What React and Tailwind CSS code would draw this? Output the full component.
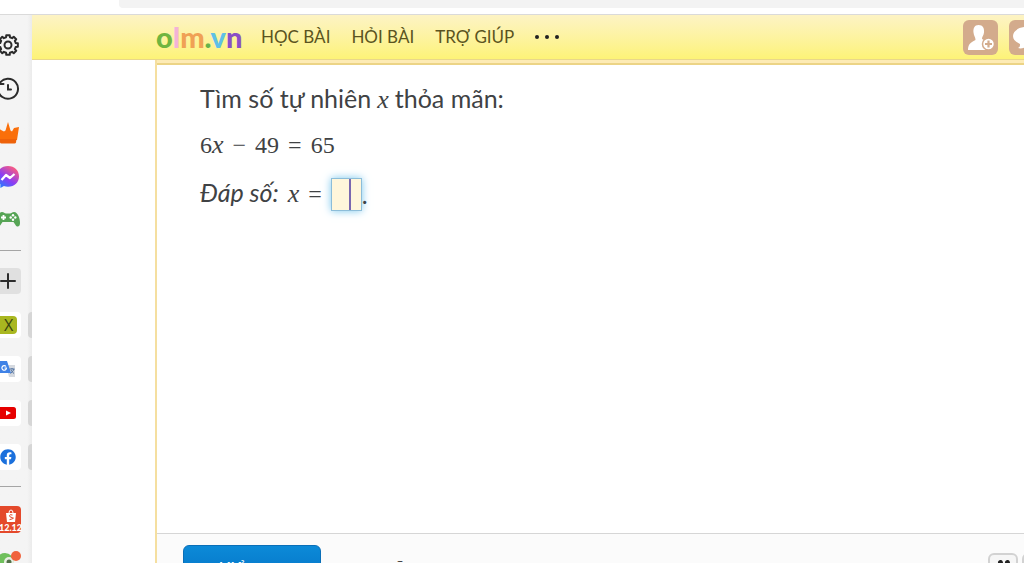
import React from 'react';
import { Plus } from 'lucide-react';
import { FaFacebook } from 'react-icons/fa';

const Tile = ({ children, label }) => (
  <li className="flex h-11 items-center justify-between">
    <button aria-label={label} className="flex h-[26px] w-[21px] items-center rounded-r bg-white">{children}</button>
    <span className="block h-[26px] w-1 rounded-l-sm bg-[#d6d6d6]"></span>
  </li>
);

const Shortcut = ({ children, label }) => (
  <li className="h-11">
    <button aria-label={label} className="flex h-11 w-4 items-center justify-center">{children}</button>
  </li>
);

// eight rounded teeth around a ring
const gearPoints = Array.from({ length: 8 }, (_, i) =>
  [[-14, 8], [-10, 10], [10, 10], [14, 8]].map(([offset, r]) => {
    const a = ((i * 45 + offset) * Math.PI) / 180;
    return `${12 + r * Math.sin(a)},${12 - r * Math.cos(a)}`;
  }).join(' ')
).join(' ');

const Sidebar = () => (
  <aside aria-label="Sidebar" className="w-8 shrink-0 overflow-hidden bg-linear-to-r from-[#f4f4f4] from-85% to-[#ebebeb]">
    <ul className="pt-2">
      <Shortcut label="Settings">
        <svg viewBox="0 0 24 24" className="size-6 shrink-0" fill="none" stroke="#2b2b2b" strokeWidth="2" strokeLinejoin="round">
          <polygon points={gearPoints} />
          <circle cx="12" cy="12" r="3.5" />
        </svg>
      </Shortcut>
      <Shortcut label="History">
        <svg viewBox="0 0 24 24" className="size-6 shrink-0" fill="none" stroke="#2b2b2b" strokeWidth="2" strokeLinecap="round">
          <path d="M3.500 6.500A10 10 0 1 1 2 12M3 2.500v4.500h4.500M12 8v4.500h3" />
        </svg>
      </Shortcut>
      <Shortcut label="Offers">
        <svg viewBox="0 0 24 24" className="size-6 shrink-0" fill="#fa6f0a">
          <path d="M1 6l4 3 3 1.500 1.500-1L12 1l2.500 8.500 1.500 1L18 7l5-1-2 13H3z" />
          <path d="M3.500 18h17l-.5 3.500q-.3 1-1.500 1h-13q-1.200 0-1.500-1z" fill="#ee620a" />
        </svg>
      </Shortcut>
      <Shortcut label="Messenger">
        <svg viewBox="0 0 24 24" className="size-6 shrink-0">
          <defs>
            <linearGradient id="msg" x1="0" y1="1" x2="0.7" y2="0">
              <stop offset="0" stopColor="#0a8cff" />
              <stop offset="0.5" stopColor="#8a3df5" />
              <stop offset="1" stopColor="#fb5c80" />
            </linearGradient>
          </defs>
          <path fill="url(#msg)" d="M12 1C5.400 1 1 5.700 1 11.600c0 3.100 1.300 5.700 3.400 7.600V23l3.500-1.900c1.300.4 2.600.6 4.100.6 6.600 0 11-4.500 11-10.300S18.600 1 12 1z" />
          <path d="M5.500 15l4.500-5 4 3 4.500-4" fill="none" stroke="#fff" strokeWidth="2.300" strokeLinejoin="round" />
        </svg>
      </Shortcut>
      <Shortcut label="Games">
        <svg viewBox="0 0 24 24" className="size-6 shrink-0">
          <path fill="#56a455" d="M6 3c2 0 2.500 1.500 4 1.500h4c1.500 0 2-1.500 4-1.500 4 0 6 7 6 11 0 4-3 4.500-4.500 2L17.500 13h-11l-2 3C3 18.500 0 18 0 14 0 10 2 3 6 3z" />
          <path d="M7.500 6v5M5 8.500h5" stroke="#fff" strokeWidth="1.800" />
          <g fill="#fff">
            <circle cx="17" cy="6.200" r="1.200" />
            <circle cx="17" cy="10.800" r="1.200" />
            <circle cx="14.700" cy="8.500" r="1.200" />
            <circle cx="19.300" cy="8.500" r="1.200" />
          </g>
        </svg>
      </Shortcut>
    </ul>
    <hr className="mt-[7px] mb-2 w-[21px] border-[#a5a5a5]" />
    <ul>
      <li className="flex h-11 items-center">
        <button aria-label="Add" className="flex h-[26px] w-[21px] items-center rounded-r bg-[#e0e0e0]">
          <Plus className="-ml-1 size-6 shrink-0 text-[#2b2b2b]" />
        </button>
      </li>
      <Tile>
        <span className="flex h-[18px] w-[17px] items-center justify-center rounded-r-sm bg-[#a9b720] font-['Open_Sans',sans-serif] text-base font-medium text-[#3a4410]">X</span>
      </Tile>
      <Tile label="Translate">
        <svg viewBox="0 0 16 18" className="h-[18px] w-4">
          <path d="M6 5h9v12H9z" fill="#d5d9df" />
          <path d="M0 1h7l4 12H0z" fill="#3f82e6" />
          <path d="M6 6.500A2.300 2.300 0 1 0 6.500 8H4.500" fill="none" stroke="#fff" strokeWidth="1.200" />
          <path d="M9.500 9h5M12 8v1M14 9q-1 3-3.500 4.500M11 10q1 2 3 3.500" fill="none" stroke="#4d6f9e" />
        </svg>
      </Tile>
      <Tile label="YouTube">
        <svg viewBox="0 0 16 12" className="h-3 w-4">
          <rect x="-4" width="20" height="12" rx="2.500" fill="#e60000" />
          <path d="M6 3.500l5 2.500-5 2.500z" fill="#fff" />
        </svg>
      </Tile>
      <Tile label="Facebook"><FaFacebook className="size-4 shrink-0 text-[#1b70dc]" /></Tile>
    </ul>
    <hr className="mt-[7px] mb-2.5 w-[21px] border-[#a5a5a5]" />
    <ul>
      <li className="flex h-11 items-center">
        <button className="flex h-[27px] w-[21px] flex-col items-center justify-end rounded-r bg-[#e4492b] text-[9px] leading-[11px] font-black text-white">
          <svg viewBox="0 0 12 13" className="h-[13px] w-3">
            <path d="M1 4h10l-1 9H2z" fill="#fff" />
            <path d="M4 4q0-3 2-3t2 3" fill="none" stroke="#fff" />
            <path d="M7.500 6q-3-1-3 .7t3 2-3 2" fill="none" stroke="#e4492b" />
          </svg>
          12.12
        </button>
      </li>
      <li className="h-11">
        <svg viewBox="0 0 24 24" className="size-6">
          <circle cx="5" cy="21" r="9" fill="#6fc05c" />
          <circle cx="9" cy="21" r="5" fill="#e8eee2" />
          <circle cx="9" cy="21" r="2.500" fill="#527149" />
          <circle cx="16" cy="15" r="5" fill="#f0633d" />
        </svg>
      </li>
    </ul>
  </aside>
);

const Header = () => (
  <header className="flex h-[45px] items-center border-b border-[#e9d78a] bg-linear-to-b from-[#fdf3c4] to-[#fdf377]">
    <a href="#" className="ml-[124px] w-[88px] text-[29px] leading-8 font-black">
      <span className="text-[#6fb540]">o</span>
      <span className="text-[#f3b3d6]">l</span>
      <span className="text-[#f0a155]">m</span>
      <span className="text-[#65b34a]">.</span>
      <span className="text-[#5fc0e6]">v</span>
      <span className="text-[#8b4fc6]">n</span>
    </a>
    <nav className="ml-[17px] flex items-center gap-[21px] text-[17px] text-[#5a5320]">
      <a href="#">HỌC BÀI</a>
      <a href="#">HỎI BÀI</a>
      <a href="#">TRỢ GIÚP</a>
      <button aria-label="More" className="flex gap-1.5 text-[#222]">
        <span className="size-1 rounded-full bg-current"></span>
        <span className="size-1 rounded-full bg-current"></span>
        <span className="size-1 rounded-full bg-current"></span>
      </button>
    </nav>
    <div className="ml-auto flex w-[61px] gap-[11px] overflow-hidden">
      <button aria-label="Add friend" className="size-[35px] shrink-0 rounded-md bg-[#d3ab8c]">
        <svg viewBox="0 0 35 35">
          <path fill="#fff" d="M15.500 5c4.500 0 6 3.500 5.500 7.500-.3 3-2 4-2 6.500l5 2.500V30H5c0-5 2-7.500 7.500-10 0-3-1.700-4-2-7.500C10 8.500 11.500 5 15.500 5z" />
          <circle cx="25.500" cy="24" r="6" fill="#fff" stroke="#d3ab8c" strokeWidth="1.500" />
          <path d="M25.500 20.500v7M22 24h7" stroke="#d3ab8c" strokeWidth="2.200" />
        </svg>
      </button>
      <button aria-label="Messages" className="size-[35px] shrink-0 rounded-md bg-[#d3ab8c]">
        <svg viewBox="0 0 35 35">
          <path fill="#fff" d="M17 7c7 0 13 4 13 10s-6 9-12 9c-3 2-6 3-9 2 2-1 2-2 2-4-4-2-7-4-7-8 0-5 6-9 13-9z" />
        </svg>
      </button>
    </div>
  </header>
);

const X = () => <i className="font-['Liberation_Serif',serif] text-[26px] leading-none">x</i>;

const Sign = ({ children }) => (
  <span className="font-['Liberation_Serif',serif] text-2xl leading-none">{children}</span>
);

const Question = () => (
  <section aria-label="Question" className="flex grow flex-col gap-[11px] pt-[15px] pl-[43px] text-[25px] leading-9 text-[#404244]">
    <p className="flex items-baseline gap-1.5">
      <span>Tìm số tự nhiên</span>
      <X />
      <span>thỏa mãn:</span>
    </p>
    <p className="flex items-baseline gap-[9px] font-['Liberation_Serif',serif] text-2xl leading-9">
      <span>6<X /></span>
      <Sign>−</Sign>
      <span>49</span>
      <Sign>=</Sign>
      <span>65</span>
    </p>
    <p className="flex items-center gap-[9px]">
      <label htmlFor="answer" className="flex items-baseline gap-[9px] pb-1">
        <i>Đáp số:</i>
        <X />
        <Sign>=</Sign>
      </label>
      <span className="flex items-center">
        <span className="flex h-[33px] w-[31px] items-center border border-[#8cbdd9] bg-[#fff6db] shadow-[0_0_8px_#7cc8ee]">
          <input id="answer" className="h-full w-[19px] border-r-2 border-[#7a68b0] bg-transparent outline-none" />
        </span>
        .
      </span>
    </p>
  </section>
);

const Footer = () => (
  <footer className="flex h-[30px] shrink-0 items-start overflow-hidden border-t border-[#d6d6d6] bg-[#fbfbfb] pt-[11px] pl-[26px]">
    <button className="h-10 w-[138px] shrink-0 rounded-md border border-[#0a6fb8] bg-linear-to-b from-[#0c8ad8] to-[#0572c4] pt-1.5 text-lg text-white">Kiểm tra</button>
    <a href="#" className="ml-4 pt-[11px] text-base text-[#444]">hướng dẫn giải</a>
    <div className="mt-2 ml-auto flex w-9 shrink-0 gap-1">
      <button aria-label="Quote" className="h-8 w-[30px] shrink-0 rounded-md border-2 border-[#d2d2d2] bg-[#f6f6f6]">
        <svg viewBox="0 0 26 28" className="h-7 w-[26px]" fill="#222">
          <path d="M8 8a2.500 2.500 0 1 1 4.500 1q-1 3-4 5l1-3.500Q8 10 8 8zM15 8a2.500 2.500 0 1 1 4.500 1q-1 3-4 5l1-3.500Q15 10 15 8z" />
        </svg>
      </button>
      <button aria-label="Next" className="h-8 w-[30px] shrink-0 rounded-md border-2 border-[#d2d2d2] bg-[#f6f6f6]"></button>
    </div>
  </footer>
);

const App = () => {
  return (
    <div className="flex h-screen flex-col overflow-hidden bg-white font-['Lato','Noto_Sans',sans-serif]">
      <div className="h-[15px] shrink-0 border-b border-[#dadada] pl-[119px]">
        <div className="h-2 rounded-bl bg-[#f3f3f3]"></div>
      </div>
      <div className="flex min-h-0 grow">
        <Sidebar />
        <div className="flex min-w-0 grow flex-col">
          <Header />
          <main className="ml-[123px] flex min-h-0 grow flex-col border-l-2 border-[#f5dfa0]">
            <div className="h-[5px] shrink-0 border-b-2 border-[#ecd486] bg-[#fdebb5]"></div>
            <Question />
            <Footer />
          </main>
        </div>
      </div>
    </div>
  );
};

export default App;
